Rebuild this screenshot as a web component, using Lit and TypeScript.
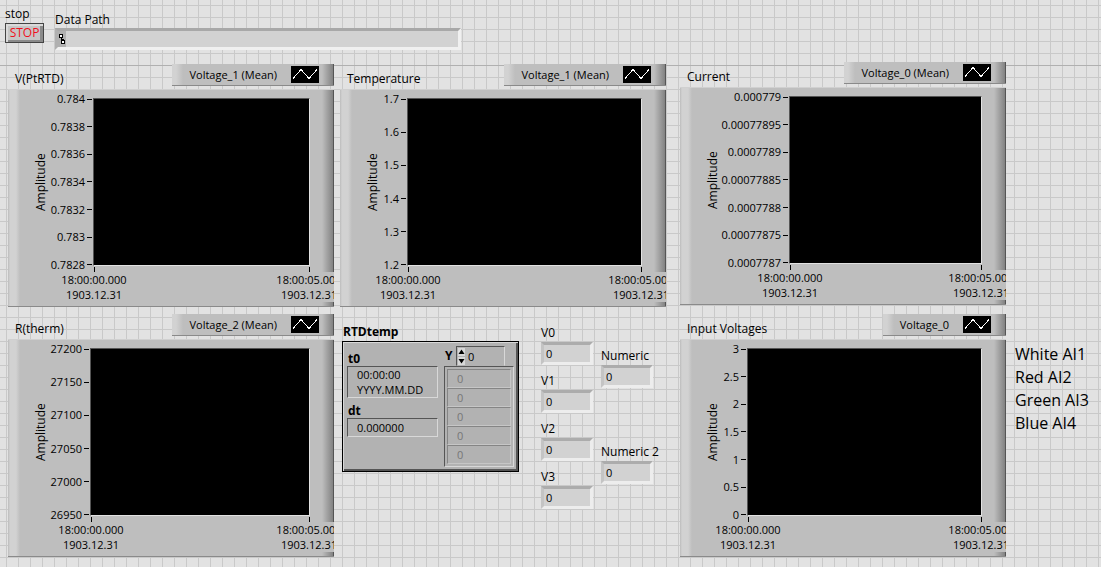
import { LitElement, html, css } from "lit";
import { customElement, property } from "lit/decorators.js";

interface ChartSpec {
  title: string;
  legend: string;
  ticks: string[];
  axis: number;
}

const CHARTS: Record<string, ChartSpec> = {
  ptrtd: {
    title: "V(PtRTD)",
    legend: "Voltage_1 (Mean)",
    ticks: ["0.784", "0.7838", "0.7836", "0.7834", "0.7832", "0.783", "0.7828"],
    axis: 45,
  },
  temperature: {
    title: "Temperature",
    legend: "Voltage_1 (Mean)",
    ticks: ["1.7", "1.6", "1.5", "1.4", "1.3", "1.2"],
    axis: 27,
  },
  current: {
    title: "Current",
    legend: "Voltage_0 (Mean)",
    ticks: ["0.000779", "0.00077895", "0.0007789", "0.00077885", "0.0007788", "0.00077875", "0.0007787"],
    axis: 69,
  },
  therm: {
    title: "R(therm)",
    legend: "Voltage_2 (Mean)",
    ticks: ["27200", "27150", "27100", "27050", "27000", "26950"],
    axis: 42,
  },
  input: {
    title: "Input Voltages",
    legend: "Voltage_0",
    ticks: ["3", "2.5", "2", "1.5", "1", "0.5", "0"],
    axis: 27,
  },
};

@customElement("wave-chart")
export class WaveChart extends LitElement {
  @property({ attribute: false }) spec!: ChartSpec;

  static styles = css`
    :host { display: block; min-width: 0; }
    .head { display: flex; justify-content: space-between; height: 25px; padding-left: 7px; }
    .title { margin: 0; padding-top: 7px; font-size: 12px; font-weight: 400; line-height: 16px; white-space: nowrap; }
    .legend {
      display: flex; align-items: center; gap: 14px; box-sizing: border-box; height: 22px;
      padding: 0 15px 0 17px; white-space: nowrap;
      border-bottom: 1px solid #8a8a8a;
      background: linear-gradient(90deg, #d2d2d2 0, #d2d2d2 4px, #bebebe 11px, #bebebe calc(100% - 12px), #828282 calc(100% - 1px), #555 calc(100% - 1px));
    }
    .wave { display: block; width: 28px; height: 17px; background: #000; }
    .panel {
      display: grid; grid-template-columns: 13px auto minmax(0, 1fr); grid-template-rows: 168px auto;
      box-sizing: border-box; height: 218px; padding: 9px 24px 0 27px; overflow: hidden;
      border-bottom: 1px solid #8a8a8a;
      background: linear-gradient(90deg, #bcbcbc 0, #d2d2d2 2px, #d2d2d2 8px, #bebebe 12px, #bebebe calc(100% - 12px), #828282 calc(100% - 1px), #555 calc(100% - 1px));
      box-shadow: inset 0 1px #d0d0d0;
    }
    .name { width: 12px; writing-mode: vertical-rl; transform: rotate(180deg); text-align: center; font-size: 12px; line-height: 12px; }
    .scale { display: flex; flex-direction: column; justify-content: space-between; margin: -6px 0; }
    .tick { display: flex; align-items: center; justify-content: flex-end; gap: 2px; line-height: 14px; padding-right: 1px; }
    .tick::after { content: ""; width: 5px; height: 1px; background: #000; }
    .plot { background: #000; border: 1px solid; border-color: #555 #e2e2e2 #e2e2e2 #555; }
    .times { grid-column: 3; display: flex; justify-content: space-between; }
    .time { display: flex; flex-direction: column; align-items: center; width: 2px; line-height: 15px; white-space: nowrap; }
    .time::before { content: ""; width: 1px; height: 5px; margin-top: 1px; background: #000; }
    .stamp { display: block; background: #bebebe; }
  `;

  render() {
    const { title, legend, ticks, axis } = this.spec;
    return html`
      <div class="head">
        <h2 class="title">${title}</h2>
        <div class="legend">
          <span>${legend}</span>
          <svg class="wave" viewBox="0 0 28 17" aria-hidden="true">
            <path d="M2 12.500L10 3.500L18 12.500L26 3.500" fill="none" stroke="#fff" shape-rendering="crispEdges" />
          </svg>
        </div>
      </div>
      <div class="panel">
        <div class="name">Amplitude</div>
        <div class="scale" style="width:${axis}px">
          ${ticks.map((t) => html`<div class="tick">${t}</div>`)}
        </div>
        <div class="plot"></div>
        <div class="times">
          ${["18:00:00.000", "18:00:05.000"].map(
            (t) => html`<div class="time"><span class="stamp">${t}</span><span class="stamp">1903.12.31</span></div>`
          )}
        </div>
      </div>
    `;
  }
}

@customElement("numeric-indicator")
export class NumericIndicator extends LitElement {
  @property() label = "";
  @property() value = "0";

  static styles = css`
    :host { display: block; }
    .label { display: block; font-size: 12px; line-height: 16px; padding-bottom: 1px; white-space: nowrap; }
    .value {
      display: block; box-sizing: border-box; width: 52px; height: 23px; padding: 0 2px; margin: 0;
      border: 3px solid; border-color: #acacac #ededed #ededed #c4c4c4; border-radius: 0;
      background: #d2d2d2; color: #000; font: inherit; outline: none;
    }
  `;

  render() {
    return html`
      <label class="label" for="value">${this.label}</label>
      <input class="value" id="value" readonly .value=${this.value} />
    `;
  }
}

@customElement("waveform-cluster")
export class WaveformCluster extends LitElement {
  static styles = css`
    :host { display: block; }
    .title { margin: 0; padding: 9px 0 1px 1px; font-size: 12px; font-weight: 700; line-height: 17px; }
    .box {
      display: grid; grid-template-columns: 91px 70px; column-gap: 6px; box-sizing: border-box;
      width: 177px; height: 131px; padding: 3px 0 0 4px; background: #b2b2b2;
      border: 1px solid #000; box-shadow: inset 1px 1px #d8d8d8, inset -2px -2px #555;
    }
    .left { display: flex; flex-direction: column; padding-top: 4px; }
    .label { font-size: 12px; font-weight: 700; line-height: 15px; padding: 2px 0 0 1px; }
    .field {
      display: block; box-sizing: border-box; width: 100%; margin: 0; padding: 0 9px;
      border: 1px solid; border-color: #555 #d8d8d8 #d8d8d8 #555; border-radius: 0;
      background: #b2b2b2; color: #000; font: inherit; line-height: 15px; outline: none; resize: none; overflow: hidden;
    }
    .stamp { height: 32px; margin-bottom: 3px; }
    .step { height: 19px; }
    .right { display: flex; flex-direction: column; padding-top: 1px; }
    .index { display: flex; height: 20px; }
    .index .label { width: 11px; }
    .spin {
      display: flex; box-sizing: border-box; width: 49px; margin: 0;
      border: 1px solid; border-color: #555 #d8d8d8 transparent #555;
    }
    .arrows { display: flex; flex-direction: column; gap: 1px; padding: 1px; }
    .arrow { display: block; width: 7px; height: 8px; padding: 0; border: 0; background: #d8d8d8; }
    .glyph { display: block; width: 7px; height: 8px; }
    .number { width: 20px; padding: 0 3px 0 2px; border: 0; background: none; font: inherit; outline: none; }
    .cells {
      display: flex; flex-direction: column; padding: 2px;
      border: 1px solid; border-color: #555 #d8d8d8 #d8d8d8 #555;
    }
    .cell {
      box-sizing: border-box; width: 100%; height: 19px; margin: 0; padding: 0 9px;
      border: 1px solid; border-color: #858585 #c6c6c6 #c6c6c6 #858585; border-radius: 0;
      background: #b2b2b2; color: #777; font: inherit;
    }
  `;

  render() {
    return html`
      <h2 class="title">RTDtemp</h2>
      <div class="box">
        <div class="left">
          <label class="label" for="t0">t0</label>
          <textarea class="field stamp" id="t0" rows="2" readonly .value=${"00:00:00\nYYYY.MM.DD"}></textarea>
          <label class="label" for="dt">dt</label>
          <input class="field step" id="dt" readonly value="0.000000" />
        </div>
        <div class="right">
          <div class="index">
            <label class="label" for="y">Y</label>
            <div class="spin">
              <div class="arrows">
                <button class="arrow" aria-label="Increment">
                  <svg class="glyph" viewBox="0 0 7 8"><path d="M3.5 1.500L6.500 6H.5z" /></svg>
                </button>
                <button class="arrow" aria-label="Decrement">
                  <svg class="glyph" viewBox="0 0 7 8"><path d="M3.5 6.500L6.500 2H.5z" /></svg>
                </button>
              </div>
              <input class="number" id="y" value="0" />
            </div>
          </div>
          <div class="cells">
            ${[0, 1, 2, 3, 4].map((i) => html`<input class="cell" disabled aria-label="Y ${i}" value="0" />`)}
          </div>
        </div>
      </div>
    `;
  }
}

@customElement("app-root")
export class AppRoot extends LitElement {
  static styles = css`
    :host {
      display: block; box-sizing: border-box; min-height: 100vh; color: #000;
      font-family: "Open Sans", "Noto Sans", sans-serif; font-size: 11px; line-height: 15px;
      background-color: #e2e2e2;
      background-image:
        linear-gradient(#b0b0b0, #b0b0b0),
        linear-gradient(90deg, #c9c9c9 1px, transparent 1px),
        linear-gradient(#c9c9c9 1px, transparent 1px);
      background-size: 100% 1px, 12px 12px, 12px 12px;
      background-position: 0 65px, 6px 0, 0 5px;
      background-repeat: no-repeat, repeat, repeat;
    }
    .bar { display: flex; gap: 11px; box-sizing: border-box; height: 62px; padding: 6px 5px 0; }
    .label { display: block; font-size: 12px; line-height: 16px; }
    .stop {
      box-sizing: border-box; width: 39px; height: 20px; margin-top: 1px; padding: 0;
      border: 1px solid #444; border-radius: 0; background: #c6c6c6; color: #f0101c;
      font: inherit; font-size: 12px; line-height: 16px;
      box-shadow: inset 2px 2px #dadada, inset -3px -2px #8a8a8a;
    }
    .path { flex: 0 1 406px; padding-top: 6px; }
    .well {
      display: flex; box-sizing: border-box; height: 22px;
      border: 3px solid; border-color: #a8a8a8 #f0f0f0 #f0f0f0 #b0b0b0; background: #d2d2d2;
    }
    .kind { display: flex; align-items: center; width: 8px; background: #b0b0b0; }
    .file { flex: 1; min-width: 0; padding: 0 4px; border: 0; background: none; font: inherit; outline: none; }
    .board {
      display: grid; grid-template-columns: 326fr 326fr 334fr 89px; grid-template-rows: 245px auto;
      gap: 7px 6px; padding-left: 8px;
    }
    .low { align-self: end; }
    .inset { padding-left: 8px; }
    .middle { display: flex; gap: 22px; padding-left: 2px; }
    .stack { display: flex; flex-direction: column; gap: 8px; padding-top: 11px; }
    .pair { display: flex; gap: 8px; }
    .wide { gap: 56px; padding-top: 34px; }
    .notes { grid-column: 4; margin: 0; padding: 29px 0 0 3px; list-style: none; font-size: 16px; line-height: 23px; white-space: nowrap; }
  `;

  private stack(names: string[], cls = "") {
    return html`<div class="stack ${cls}">
      ${names.map((n) => html`<numeric-indicator label=${n}></numeric-indicator>`)}
    </div>`;
  }

  render() {
    return html`
      <header class="bar">
        <div>
          <label class="label" for="stop">stop</label>
          <button class="stop" id="stop">STOP</button>
        </div>
        <div class="path">
          <label class="label" for="path">Data Path</label>
          <div class="well">
            <span class="kind">
              <svg width="8" height="11" viewBox="0 0 8 11" aria-hidden="true" shape-rendering="crispEdges">
                <path d="M1.5 .5h3v3h-3zM3.500 6.500h3v3h-3zM3.500 4v1h1.500v1.500" fill="#fff" stroke="#000" />
              </svg>
            </span>
            <input class="file" id="path" readonly />
          </div>
        </div>
      </header>
      <main class="board">
        <wave-chart class="low" .spec=${CHARTS.ptrtd}></wave-chart>
        <wave-chart class="low" .spec=${CHARTS.temperature}></wave-chart>
        <wave-chart class="inset" .spec=${CHARTS.current}></wave-chart>
        <span></span>
        <wave-chart .spec=${CHARTS.therm}></wave-chart>
        <section class="middle">
          <waveform-cluster></waveform-cluster>
          <div class="pair">
            ${this.stack(["V0", "V1", "V2", "V3"])}
            ${this.stack(["Numeric", "Numeric 2"], "wide")}
          </div>
        </section>
        <wave-chart class="inset" .spec=${CHARTS.input}></wave-chart>
        <ul class="notes">
          <li>White AI1</li>
          <li>Red AI2</li>
          <li>Green AI3</li>
          <li>Blue AI4</li>
        </ul>
      </main>
    `;
  }
}
